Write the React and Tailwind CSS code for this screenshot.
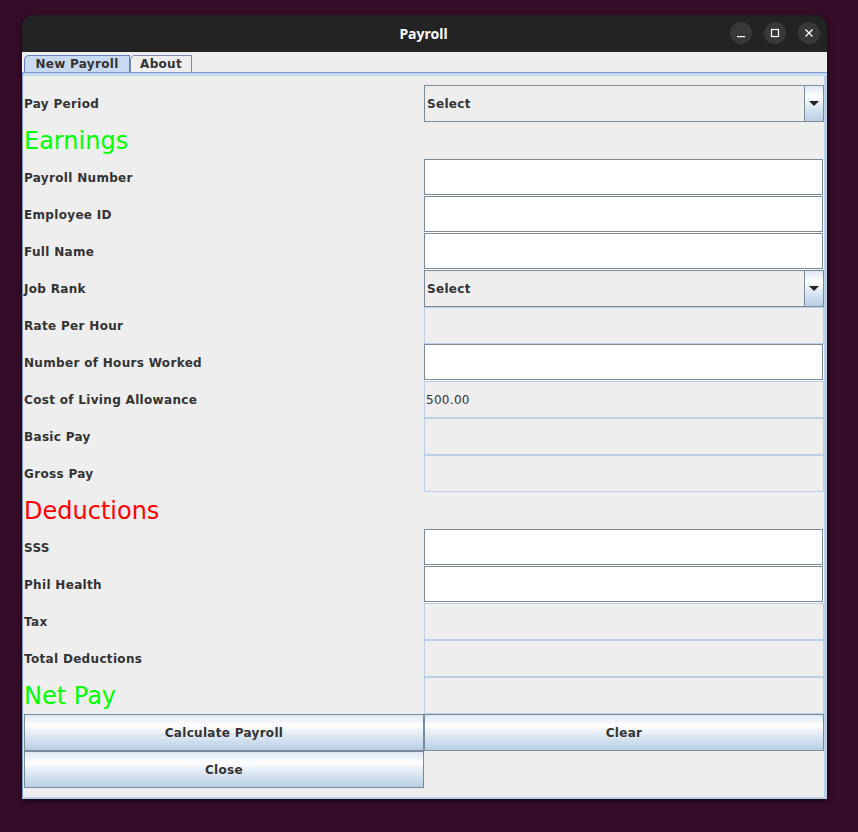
import React from "react";

const F = "font-['DejaVu_Sans','Liberation_Sans',sans-serif]";
const GRAD =
  "bg-[linear-gradient(to_bottom,#dde8f3_0%,#ffffff_30%,#dde8f3_60%,#b8cfe5_100%)]";

function Arrow() {
  return (
    <svg width="10" height="6" viewBox="0 0 10 6">
      <polygon points="0,0 10,0 5,5" fill="#222" />
    </svg>
  );
}

function Combo() {
  return (
    <div className="h-full flex border border-[#7a8a99] bg-[#eeeeee]">
      <div className="flex-1 flex items-center pl-[2px] font-bold text-[12px] text-[#333333] tracking-[0.3px]">
        Select
      </div>
      <div className={`w-[19px] border-l border-[#7a8a99] ${GRAD} flex items-center justify-center`}>
        <Arrow />
      </div>
    </div>
  );
}

function TextField() {
  return (
    <div className="h-full border-r border-b border-white">
      <div className="h-full bg-white border border-[#7a8a99]" />
    </div>
  );
}

function ReadOnly({ value }) {
  return (
    <div className="h-full bg-[#eeeeee] border border-[#b8cfe5] flex items-center pl-[1px] text-[12px] text-[#333333] tracking-[0.3px]">
      {value}
    </div>
  );
}

function Label({ children }) {
  return (
    <div className="h-full flex items-center font-bold text-[12px] text-[#333333] tracking-[0.32px]">
      {children}
    </div>
  );
}

function Heading({ children, color }) {
  return (
    <div className={`h-full flex items-center text-[24px] leading-none ${color}`}>
      {children}
    </div>
  );
}

function Btn({ children }) {
  return (
    <button
      className={`h-full w-full border border-[#7a8a99] ${GRAD} font-bold text-[12px] text-[#333333] tracking-[0.3px] ${F}`}
    >
      {children}
    </button>
  );
}

const rows = [
  ["label", "Pay Period", "combo"],
  ["heading", "Earnings", "green"],
  ["label", "Payroll Number", "text"],
  ["label", "Employee ID", "text"],
  ["label", "Full Name", "text"],
  ["label", "Job Rank", "combo"],
  ["label", "Rate Per Hour", "ro"],
  ["label", "Number of Hours Worked", "text"],
  ["label", "Cost of Living Allowance", "ro", "500.00"],
  ["label", "Basic Pay", "ro"],
  ["label", "Gross Pay", "ro"],
  ["heading", "Deductions", "red"],
  ["label", "SSS", "text"],
  ["label", "Phil Health", "text"],
  ["label", "Tax", "ro"],
  ["label", "Total Deductions", "ro"],
  ["heading", "Net Pay", "green", "ro"],
];

function Right({ type, value }) {
  if (type === "combo") return <Combo />;
  if (type === "text") return <TextField />;
  if (type === "ro") return <ReadOnly value={value} />;
  return <div />;
}

export default function App() {
  return (
    <div className={`w-[858px] h-[832px] bg-[#370c29] pt-[15px] pl-[22px] ${F}`}>
      <div className="w-[805px] h-[784px] flex flex-col rounded-t-[12px] overflow-hidden shadow-[0_2px_6px_rgba(0,0,0,0.6)]">
        {/* Title bar */}
        <div className="h-[37px] bg-[#232323] flex items-center relative">
          <div className="flex-1 text-center text-white font-bold text-[14px] font-['Noto_Sans',sans-serif] pr-[2px]">
            Payroll
          </div>
          <div className="absolute right-[7px] top-[7px] flex gap-[12px]">
            <div className="w-[22px] h-[22px] rounded-full bg-[#383838] flex items-center justify-center">
              <svg width="10" height="10" viewBox="0 0 10 10">
                <rect x="1" y="8" width="8" height="1.2" fill="#fff" />
              </svg>
            </div>
            <div className="w-[22px] h-[22px] rounded-full bg-[#383838] flex items-center justify-center">
              <svg width="10" height="10" viewBox="0 0 10 10">
                <rect x="1.5" y="1.5" width="7" height="7" fill="none" stroke="#fff" strokeWidth="1.2" />
              </svg>
            </div>
            <div className="w-[22px] h-[22px] rounded-full bg-[#383838] flex items-center justify-center">
              <svg width="10" height="10" viewBox="0 0 10 10">
                <path d="M1.5 1.5 L8.5 8.5 M8.5 1.5 L1.5 8.5" stroke="#fff" strokeWidth="1.3" />
              </svg>
            </div>
          </div>
        </div>

        {/* Body */}
        <div className="flex-1 bg-[#eeeeee] flex flex-col">
          {/* Tabs */}
          <div className="h-[20px] flex items-end pl-[2px]">
            <div className="h-[17px] w-[106px] bg-[#c8daef] border border-b-0 border-[#6382bf] rounded-tl-[5px] flex items-center justify-center font-bold text-[12px] text-[#333333] tracking-[0.3px]">
              New Payroll
            </div>
            <div className="h-[17px] w-[62px] bg-[#eeeeee] border border-b-0 border-[#7a8ab8] rounded-tl-[5px] flex items-center justify-center font-bold text-[12px] text-[#333333] tracking-[0.3px]">
              About
            </div>
          </div>
          {/* Panel */}
          <div className="flex-1 flex flex-col border-t border-[#7b9ad2]">
            <div className="h-[3px] bg-[#c8daef] border-l border-[#7b9ad2]" />
            <div className="flex-1 border-l border-[#7b9ad2] border-r-[3px] border-r-[#b8cfe5] border-b-[2px] border-b-[#b8cfe5] pl-[1px] pt-[9px]">
              <div className="grid grid-cols-[400px_400px] auto-rows-[37px]">
                {rows.map((r, i) => (
                  <React.Fragment key={i}>
                    {r[0] === "label" ? (
                      <Label>{r[1]}</Label>
                    ) : (
                      <Heading color={r[2] === "green" ? "text-[#00ff00]" : "text-[#ff0000]"}>
                        {r[1]}
                      </Heading>
                    )}
                    {r[0] === "label" ? (
                      <Right type={r[2]} value={r[3]} />
                    ) : (
                      <Right type={r[3]} />
                    )}
                  </React.Fragment>
                ))}
                <Btn>Calculate Payroll</Btn>
                <Btn>Clear</Btn>
                <Btn>Close</Btn>
                <div />
              </div>
            </div>
          </div>
        </div>
      </div>
    </div>
  );
}
